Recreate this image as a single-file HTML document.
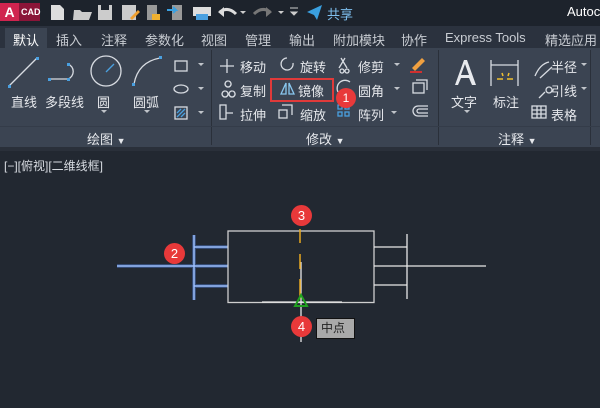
<!DOCTYPE html>
<html><head><meta charset="utf-8"><style>
*{margin:0;padding:0;box-sizing:border-box}
body{width:600px;height:408px;overflow:hidden;background:#222831;font-family:"Liberation Sans","Noto Sans CJK SC",sans-serif;color:#e6e8ec;position:relative}
.a{position:absolute;white-space:nowrap}
.t{font-size:13px}
</style></head><body>
<div class="a" style="left:0;top:0;width:600px;height:26px;background:#1d232c"></div>
<div class="a" style="left:0;top:3px;width:40px;height:18px;background:#8a1538"></div>
<div class="a" style="left:0;top:3px;width:19px;height:18px;background:#d0244f;color:#fff;font-weight:bold;font-size:14px;text-align:center;line-height:18px">A</div>
<div class="a" style="left:21px;top:3px;color:#fff;font-size:9px;font-weight:bold;line-height:18px">CAD</div>
<svg class="a" style="left:48px;top:2px" width="280" height="22">
<path d="M3 3h9l4 4v11H3z" fill="#ddd"/>
<path d="M26 8h6l2 2h10l-3 8H25z" fill="#ccc"/>
<rect x="50" y="3" width="14" height="15" fill="#ccc"/><rect x="53" y="3" width="8" height="5" fill="#1d232c"/>
<rect x="74" y="3" width="14" height="15" fill="#ccc"/><path d="M82 16l8-8 2 2-8 8z" fill="#f0a030"/>
<rect x="99" y="3" width="10" height="15" fill="#999"/><path d="M104 12h8v6h-8z" fill="#f0b030"/>
<rect x="124" y="3" width="10" height="15" fill="#999"/><path d="M119 8h9l-3-3M128 8l-3 3" stroke="#3aa0e0" stroke-width="2" fill="none"/>
<rect x="145" y="5" width="18" height="9" fill="#ddd"/><rect x="148" y="12" width="12" height="6" fill="#4aa0e0"/>
<path d="M172 10q8-6 16 2" stroke="#ddd" stroke-width="3" fill="none"/><path d="M170 10l6-5v10z" fill="#ddd"/>
<path d="M192 9l3 3 3-3z" fill="#ccc"/>
<path d="M222 10q-8-6-16 2" stroke="#777" stroke-width="3" fill="none"/><path d="M224 10l-6-5v10z" fill="#777"/>
<path d="M230 9l3 3 3-3z" fill="#ccc"/>
<path d="M242 6h8M243 10l3 3 3-3z" stroke="#ccc" fill="#ccc"/>
<path d="M259 10l15-7-5 15-3-5z" fill="#3aa0e0"/>
</svg>
<div class="a" style="left:327px;top:4px;font-size:13px;color:#7ec0f0">共享</div>
<div class="a" style="left:567px;top:4px;font-size:13px;color:#fff">Autoc</div>
<div class="a" style="left:0;top:26px;width:600px;height:22px;background:#2b323e"></div>
<div class="a" style="left:5px;top:28px;width:42px;height:20px;background:#3b4452"></div>
<div class="a t" style="left:13px;top:30px;color:#fff">默认</div>
<div class="a t" style="left:56px;top:30px;color:#c8ccd2">插入</div>
<div class="a t" style="left:101px;top:30px;color:#c8ccd2">注释</div>
<div class="a t" style="left:145px;top:30px;color:#c8ccd2">参数化</div>
<div class="a t" style="left:201px;top:30px;color:#c8ccd2">视图</div>
<div class="a t" style="left:245px;top:30px;color:#c8ccd2">管理</div>
<div class="a t" style="left:289px;top:30px;color:#c8ccd2">输出</div>
<div class="a t" style="left:333px;top:30px;color:#c8ccd2">附加模块</div>
<div class="a t" style="left:401px;top:30px;color:#c8ccd2">协作</div>
<div class="a" style="left:445px;top:30px;font-size:13px;color:#c8ccd2">Express Tools</div>
<div class="a t" style="left:545px;top:30px;color:#c8ccd2">精选应用</div>
<div class="a" style="left:0;top:48px;width:600px;height:100px;background:#3b4452"></div>
<div class="a" style="left:0;top:147px;width:600px;height:4px;background:#2a303a"></div>
<div class="a" style="left:211px;top:50px;width:1px;height:95px;background:#2a303a"></div>
<div class="a" style="left:438px;top:50px;width:1px;height:95px;background:#2a303a"></div>
<div class="a" style="left:590px;top:50px;width:1px;height:95px;background:#2a303a"></div>
<div class="a" style="left:0;top:126px;width:600px;height:1px;background:#343c49"></div>
<svg class="a" style="left:0;top:50px" width="600" height="75">
<g stroke="#d8dce2" stroke-width="1.3" fill="none">
<line x1="9" y1="36" x2="37" y2="8"/>
<path d="M49 29h19a8 8 0 0 0 0-15"/>
<circle cx="106" cy="21" r="15"/><line x1="106" y1="22" x2="114" y2="14" stroke="#4aa0e0"/>
<path d="M134 34q4-22 26-26"/>
<rect x="175" y="11" width="12" height="10"/>
<ellipse cx="181" cy="39" rx="7" ry="4"/>
<rect x="175" y="57" width="12" height="12"/><path d="M177 67l8-8M177 63l4-4M181 67l4-4" stroke="#4aa0e0"/>
<path d="M227 9v14M220 16h14"/>
<path d="M287 8a6 6 0 1 0 6 5"/>
<path d="M228 31a3 3 0 1 0 0.1 0M225 41a3 3 0 1 0 0.1 0M232 41a3 3 0 1 0 0.1 0"/>
<path d="M286 33l-5 11h5zM289 33l5 11h-5z" stroke="#8ac8f0"/>
<rect x="220" y="55" width="6" height="14"/><path d="M226 63h7"/>
<rect x="279" y="60" width="8" height="8"/><path d="M282 55h10v10"/>
<path d="M341 8l6 10M345 8l-6 10"/><circle cx="342" cy="21" r="2"/><circle cx="347" cy="21" r="2"/>
<path d="M338 42a8 8 0 0 1 12-10"/>
<rect x="338" y="55" width="4" height="4" stroke="#4aa0e0"/><rect x="345" y="55" width="4" height="4" stroke="#4aa0e0"/><rect x="338" y="62" width="4" height="4" stroke="#4aa0e0"/><rect x="345" y="62" width="4" height="4" stroke="#4aa0e0"/>
<rect x="413" y="33" width="11" height="10"/><path d="M416 30h11v10"/>
<path d="M428 56h-10a5 5 0 0 0 0 10h10M428 59h-9a2 2 0 0 0 0 4h9"/>
<path d="M491 10v26M518 10v26M491 15h27"/>
<path d="M535 26q5-12 14-14M552 17l-12 11" /><path d="M539 48l6-6"/><circle cx="549" cy="40" r="3"/>
<rect x="532" y="56" width="14" height="12"/><path d="M532 60h14M532 64h14M537 56v12M541 56v12"/>
</g>
<path d="M412 18l10-10 3 3-10 10z" fill="#f0a040"/><path d="M410 22h12" stroke="#d03030" stroke-width="2"/>
<path d="M497 29h6M507 29h6M502 23l1 3M509 23l-1 3" stroke="#f0c030" stroke-width="1.5"/>
<path d="M455 35l9-25h3l9 25h-4l-3-7h-8l-3 7zM461 25h8l-4-11z" fill="#e8eaee" fill-rule="evenodd"/>
<g fill="#4aa0e0"><rect x="8" y="35" width="3" height="3"/><rect x="36" y="7" width="3" height="3"/><rect x="48" y="28" width="3" height="3"/><rect x="67" y="28" width="3" height="3"/><rect x="67" y="13" width="3" height="3"/><rect x="159" y="6" width="3" height="3"/><rect x="132" y="33" width="3" height="3"/></g>
<g fill="#c0c4ca"><path d="M198 13l3 3 3-3zM198 37l3 3 3-3zM198 61l3 3 3-3zM101 60l3 3 3-3zM144 60l3 3 3-3zM394 13l3 3 3-3zM394 37l3 3 3-3zM391 61l3 3 3-3zM464 60l3 3 3-3zM581 13l3 3 3-3zM581 37l3 3 3-3z"/></g>
</svg>
<div class="a t" style="left:11px;top:92px">直线</div>
<div class="a t" style="left:45px;top:92px">多段线</div>
<div class="a t" style="left:97px;top:92px">圆</div>
<div class="a t" style="left:133px;top:92px">圆弧</div>
<div class="a t" style="left:240px;top:57px">移动</div>
<div class="a t" style="left:300px;top:57px">旋转</div>
<div class="a t" style="left:358px;top:57px">修剪</div>
<div class="a t" style="left:240px;top:81px">复制</div>
<div class="a t" style="left:298px;top:81px">镜像</div>
<div class="a t" style="left:358px;top:81px">圆角</div>
<div class="a t" style="left:240px;top:105px">拉伸</div>
<div class="a t" style="left:300px;top:105px">缩放</div>
<div class="a t" style="left:358px;top:105px">阵列</div>
<div class="a t" style="left:451px;top:92px">文字</div>
<div class="a t" style="left:493px;top:92px">标注</div>
<div class="a t" style="left:551px;top:57px">半径</div>
<div class="a t" style="left:551px;top:81px">引线</div>
<div class="a t" style="left:551px;top:105px">表格</div>
<div class="a" style="left:270px;top:78px;width:64px;height:24px;border:2px solid #e03a3a"></div>
<div class="a" style="left:336px;top:88px;width:20px;height:20px;border-radius:50%;background:#e8393a;color:#fff;font-size:12px;text-align:center;line-height:20px">1</div>
<div class="a t" style="left:87px;top:129px">绘图 <span style="font-size:9px">▼</span></div>
<div class="a t" style="left:306px;top:129px">修改 <span style="font-size:9px">▼</span></div>
<div class="a t" style="left:498px;top:129px">注释 <span style="font-size:9px">▼</span></div>
<div class="a" style="left:4px;top:157px;font-size:12px;color:#d8dce2">[−][俯视][二维线框]</div>
<svg class="a" style="left:0;top:0" width="600" height="408">
<g stroke="#5a8ef0" stroke-width="4" opacity="0.35"><path d="M117 266h111M194 235v65M194 247h34M194 286h34"/></g>
<g stroke="#9cc0ff" stroke-width="1.5"><path d="M117 266h111M194 235v65M194 247h34M194 286h34"/></g>
<g stroke="#e8e8e8" stroke-width="1.3" fill="none">
<rect x="228" y="231" width="146" height="71.5" stroke="#cfcfcf"/>
<path d="M374 247h33M374 266h112M374 285h33M407 234v65M301 262v80M262 302h80"/>
</g>
<path d="M300 229v14M300 254v15M300 279v20" stroke="#e8a820" stroke-width="1.5"/>
<path d="M301 295l-6 11h12z" stroke="#20a020" stroke-width="2" fill="none"/>
</svg>
<div class="a" style="left:164px;top:243px;width:21px;height:21px;border-radius:50%;background:#e8393a;color:#fff;font-size:13px;text-align:center;line-height:21px">2</div>
<div class="a" style="left:291px;top:205px;width:21px;height:21px;border-radius:50%;background:#e8393a;color:#fff;font-size:13px;text-align:center;line-height:21px">3</div>
<div class="a" style="left:291px;top:316px;width:21px;height:21px;border-radius:50%;background:#e8393a;color:#fff;font-size:13px;text-align:center;line-height:21px">4</div>
<div class="a" style="left:316px;top:318px;width:39px;height:21px;background:#a9a9a9;border:1px solid #111;color:#222;font-size:12px;line-height:19px;padding-left:4px">中点</div>
</body></html>
